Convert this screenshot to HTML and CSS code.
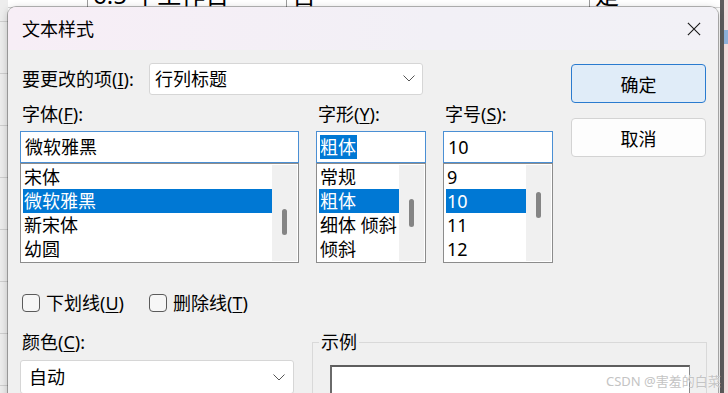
FILE: index.html
```html
<!DOCTYPE html>
<html lang="zh-CN">
<head>
    <meta charset="UTF-8">
    <meta name="viewport" content="width=device-width, initial-scale=1.0">
    <title>文本样式</title>
    <link rel="stylesheet" href="styles.css">
</head>
<body>
    <div class="sheet">
        <div class="row-head"></div>
        <div class="cells">
            <div class="top-row">
                <span class="cell c1"></span>
                <span class="cell c2">6.5 个工作日</span>
                <span class="cell c3">否</span>
                <span class="cell c4">是</span>
            </div>
        </div>
        <div class="edge"></div>
        <div class="pink"><span class="pink-mark"></span></div>
    </div>

    <div class="dialog">
        <div class="titlebar">
            <span class="title">文本样式</span>
            <svg class="close" width="16" height="16" viewBox="0 0 16 16">
                <path d="M1 1 L15 15 M15 1 L1 15" stroke="#1a1a1a" stroke-width="1.3" fill="none"/>
            </svg>
        </div>

        <div class="dlg-body">
            <div class="main">
                <div class="left">
                    <div class="item-row">
                        <label class="item-label">要更改的项(<u>I</u>):</label>
                        <div class="combo item-combo">
                            <span>行列标题</span>
                            <svg width="12" height="7" viewBox="0 0 12 7"><path d="M0.5 0.5 L6 6 L11.5 0.5" stroke="#555" fill="none"/></svg>
                        </div>
                    </div>

                    <div class="pickers">
                        <div class="picker font-pick">
                            <label class="pick-label">字体(<u>F</u>):</label>
                            <div class="pick-input"><span>微软雅黑</span></div>
                            <div class="pick-list">
                                <ul>
                                    <li>宋体</li>
                                    <li class="sel">微软雅黑</li>
                                    <li>新宋体</li>
                                    <li>幼圆</li>
                                </ul>
                                <div class="scroll"><span class="thumb thumb-font"></span></div>
                            </div>
                        </div>
                        <div class="picker">
                            <label class="pick-label">字形(<u>Y</u>):</label>
                            <div class="pick-input"><span class="hl">粗体</span></div>
                            <div class="pick-list">
                                <ul>
                                    <li>常规</li>
                                    <li class="sel">粗体</li>
                                    <li>细体 倾斜</li>
                                    <li>倾斜</li>
                                </ul>
                                <div class="scroll"><span class="thumb thumb-style"></span></div>
                            </div>
                        </div>
                        <div class="picker">
                            <label class="pick-label">字号(<u>S</u>):</label>
                            <div class="pick-input"><span>10</span></div>
                            <div class="pick-list">
                                <ul>
                                    <li>9</li>
                                    <li class="sel">10</li>
                                    <li>11</li>
                                    <li>12</li>
                                </ul>
                                <div class="scroll"><span class="thumb thumb-size"></span></div>
                            </div>
                        </div>
                    </div>
                </div>

                <div class="buttons">
                    <button class="btn primary">确定</button>
                    <button class="btn">取消</button>
                </div>
            </div>

            <div class="checks">
                <label class="check"><span class="box"></span><span>下划线(<u>U</u>)</span></label>
                <label class="check"><span class="box"></span><span>删除线(<u>T</u>)</span></label>
            </div>

            <div class="bottom">
                <div class="color-col">
                    <label class="pick-label">颜色(<u>C</u>):</label>
                    <div class="combo color-combo">
                        <span>自动</span>
                        <svg width="12" height="7" viewBox="0 0 12 7"><path d="M0.5 0.5 L6 6 L11.5 0.5" stroke="#555" fill="none"/></svg>
                    </div>
                </div>
                <fieldset class="sample">
                    <legend>示例</legend>
                    <div class="sample-box"></div>
                </fieldset>
            </div>
        </div>
    </div>

    <div class="watermark">CSDN @害羞的白菜</div>
</body>
</html>
```

FILE: styles.css
```css
html, body {
    margin: 0;
}
body {
    width: 728px;
    height: 393px;
    overflow: hidden;
    position: relative;
    background: #fff;
    font-family: "Noto Sans", "Noto Sans CJK SC", sans-serif;
    font-size: 18px;
    color: #000;
}
u {
    text-decoration-thickness: 1px;
    text-underline-offset: 2px;
}

/* spreadsheet behind the dialog */
.sheet {
    display: flex;
    height: 393px;
}
.row-head {
    width: 8px;
    background: repeating-linear-gradient(to bottom, #ededed 0 21px, #cfcfcf 21px 22px, #ededed 22px 52px);
}
.cells {
    flex: 1;
    background: #fff;
}
.top-row {
    display: flex;
    height: 7px;
    overflow: hidden;
    border-bottom: 1px solid #d4d4d4;
}
.cell {
    display: block;
    font-size: 24px;
    line-height: 24px;
    margin-top: -17px;
    padding-left: 5px;
    border-right: 1px solid #9c9c9c;
    white-space: nowrap;
}
.c1 { width: 74px; }
.c2 { width: 193px; }
.c3 { width: 297px; }
.c4 { flex: 1; border-right: none; }
.edge {
    width: 4px;
    background: #5c5c5c;
}
.pink {
    width: 4px;
    background: #f2dcdc;
}
.pink-mark {
    display: block;
    height: 14px;
    margin-top: 30px;
    background: #8fb1da;
}

/* dialog window */
.dialog {
    position: absolute;
    left: 8px;
    top: 7px;
    width: 710px;
    height: 400px;
    background: #f0f0f0;
    border-radius: 8px 8px 0 0;
    box-shadow: 0 0 0 1px rgba(0, 0, 0, 0.28), 0 2px 8px rgba(0, 0, 0, 0.25);
    overflow: hidden;
}
.titlebar {
    height: 43px;
    display: flex;
    align-items: center;
    justify-content: space-between;
    padding: 0 17px 0 14px;
    background: linear-gradient(to right, #f7eef6, #f2f0f6 60%, #f2f1f6);
}
.title {
    line-height: 22px;
}
.close {
    display: block;
    width: 14px;
    height: 14px;
}

.dlg-body {
    padding: 13px 0 0 12px;
}
.main {
    display: flex;
}
.left {
    width: 533px;
}
.item-row {
    display: flex;
    align-items: center;
    height: 31px;
}
.item-label {
    width: 127px;
    padding-left: 2px;
    line-height: 22px;
    white-space: nowrap;
}
.combo {
    box-sizing: border-box;
    display: flex;
    align-items: center;
    justify-content: space-between;
    background: #fff;
    border: 1px solid #d6d6d6;
    border-radius: 3px;
    line-height: 22px;
}
.item-combo {
    width: 274px;
    height: 32px;
    padding: 0 7px 0 5px;
}

.pickers {
    display: grid;
    grid-template-columns: 279px 110px 110px;
    column-gap: 17px;
    margin-top: 9px;
}
.pick-label {
    display: block;
    line-height: 22px;
    padding-left: 2px;
    margin-bottom: 6px;
}
.pick-input {
    box-sizing: border-box;
    height: 32px;
    border: 1px solid #4a8fd4;
    background: #fff;
    padding: 0 4px;
    display: flex;
    align-items: center;
    line-height: 22px;
}
.hl {
    background: #0078d4;
    color: #fff;
    line-height: 24px;
    padding-right: 1px;
    margin-left: -1px;
}
.pick-list {
    box-sizing: border-box;
    height: 100px;
    border: 1px solid #8c8c8c;
    background: #fff;
    display: flex;
}
.pick-list ul {
    flex: 1;
    list-style: none;
    margin: 0;
    padding: 1px 0 0 2px;
    overflow: hidden;
}
.pick-list li {
    height: 24px;
    line-height: 24px;
    padding-left: 1px;
    white-space: nowrap;
    overflow: hidden;
}
.pick-list li.sel {
    background: #0078d4;
    color: #fff;
}
.scroll {
    width: 25px;
    margin: 1px 1px 1px 0;
    background: #f0f0f0;
    position: relative;
}
.thumb {
    position: absolute;
    left: 10px;
    width: 5px;
    border-radius: 3px;
    background: #858585;
}
.thumb-font { top: 44px; height: 26px; }
.thumb-style { top: 34px; height: 28px; }
.thumb-size { top: 27px; height: 26px; }

.buttons {
    margin-left: 18px;
    display: flex;
    flex-direction: column;
    gap: 15px;
    padding-top: 1px;
}
.btn {
    box-sizing: border-box;
    width: 135px;
    height: 39px;
    font-family: inherit;
    font-size: 18px;
    color: #000;
    background: #fdfdfd;
    border: 1px solid #d3d3d3;
    border-radius: 4px;
    padding: 0;
}
.btn.primary {
    background: #e0ecf8;
    border: 1px solid #2a7bcf;
}

.checks {
    display: grid;
    grid-template-columns: 127px auto;
    margin-top: 29px;
    padding-left: 2px;
}
.check {
    display: flex;
    align-items: center;
    gap: 6px;
    line-height: 22px;
}
.box {
    box-sizing: border-box;
    width: 18px;
    height: 18px;
    border: 1px solid #5a5a5a;
    border-radius: 4px;
    background: #f6f6f6;
}

.bottom {
    display: flex;
    margin-top: 17px;
}
.color-col {
    width: 274px;
}
.color-col .pick-label {
    margin-bottom: 7px;
}
.color-combo {
    height: 34px;
    padding: 0 8px 0 8px;
}
.sample {
    box-sizing: border-box;
    width: 395px;
    height: 120px;
    margin: 0 0 0 18px;
    padding: 0 16px 0 17px;
    border: 1px solid #d9d9d9;
    min-width: 0;
}
.sample legend {
    padding: 0 2px;
    margin-left: -11px;
    line-height: 22px;
}
.sample-box {
    margin-top: 12px;
    height: 60px;
    background: #fff;
    border: 1px solid #8a8a8a;
    border-top: 2px solid #5e5e5e;
    border-left: 2px solid #6a6a6a;
}

.watermark {
    position: absolute;
    left: 606px;
    top: 372px;
    font-size: 13px;
    line-height: 18px;
    color: #c4c4c4;
    white-space: nowrap;
    text-shadow: 0 0 1px #fff;
}
```
